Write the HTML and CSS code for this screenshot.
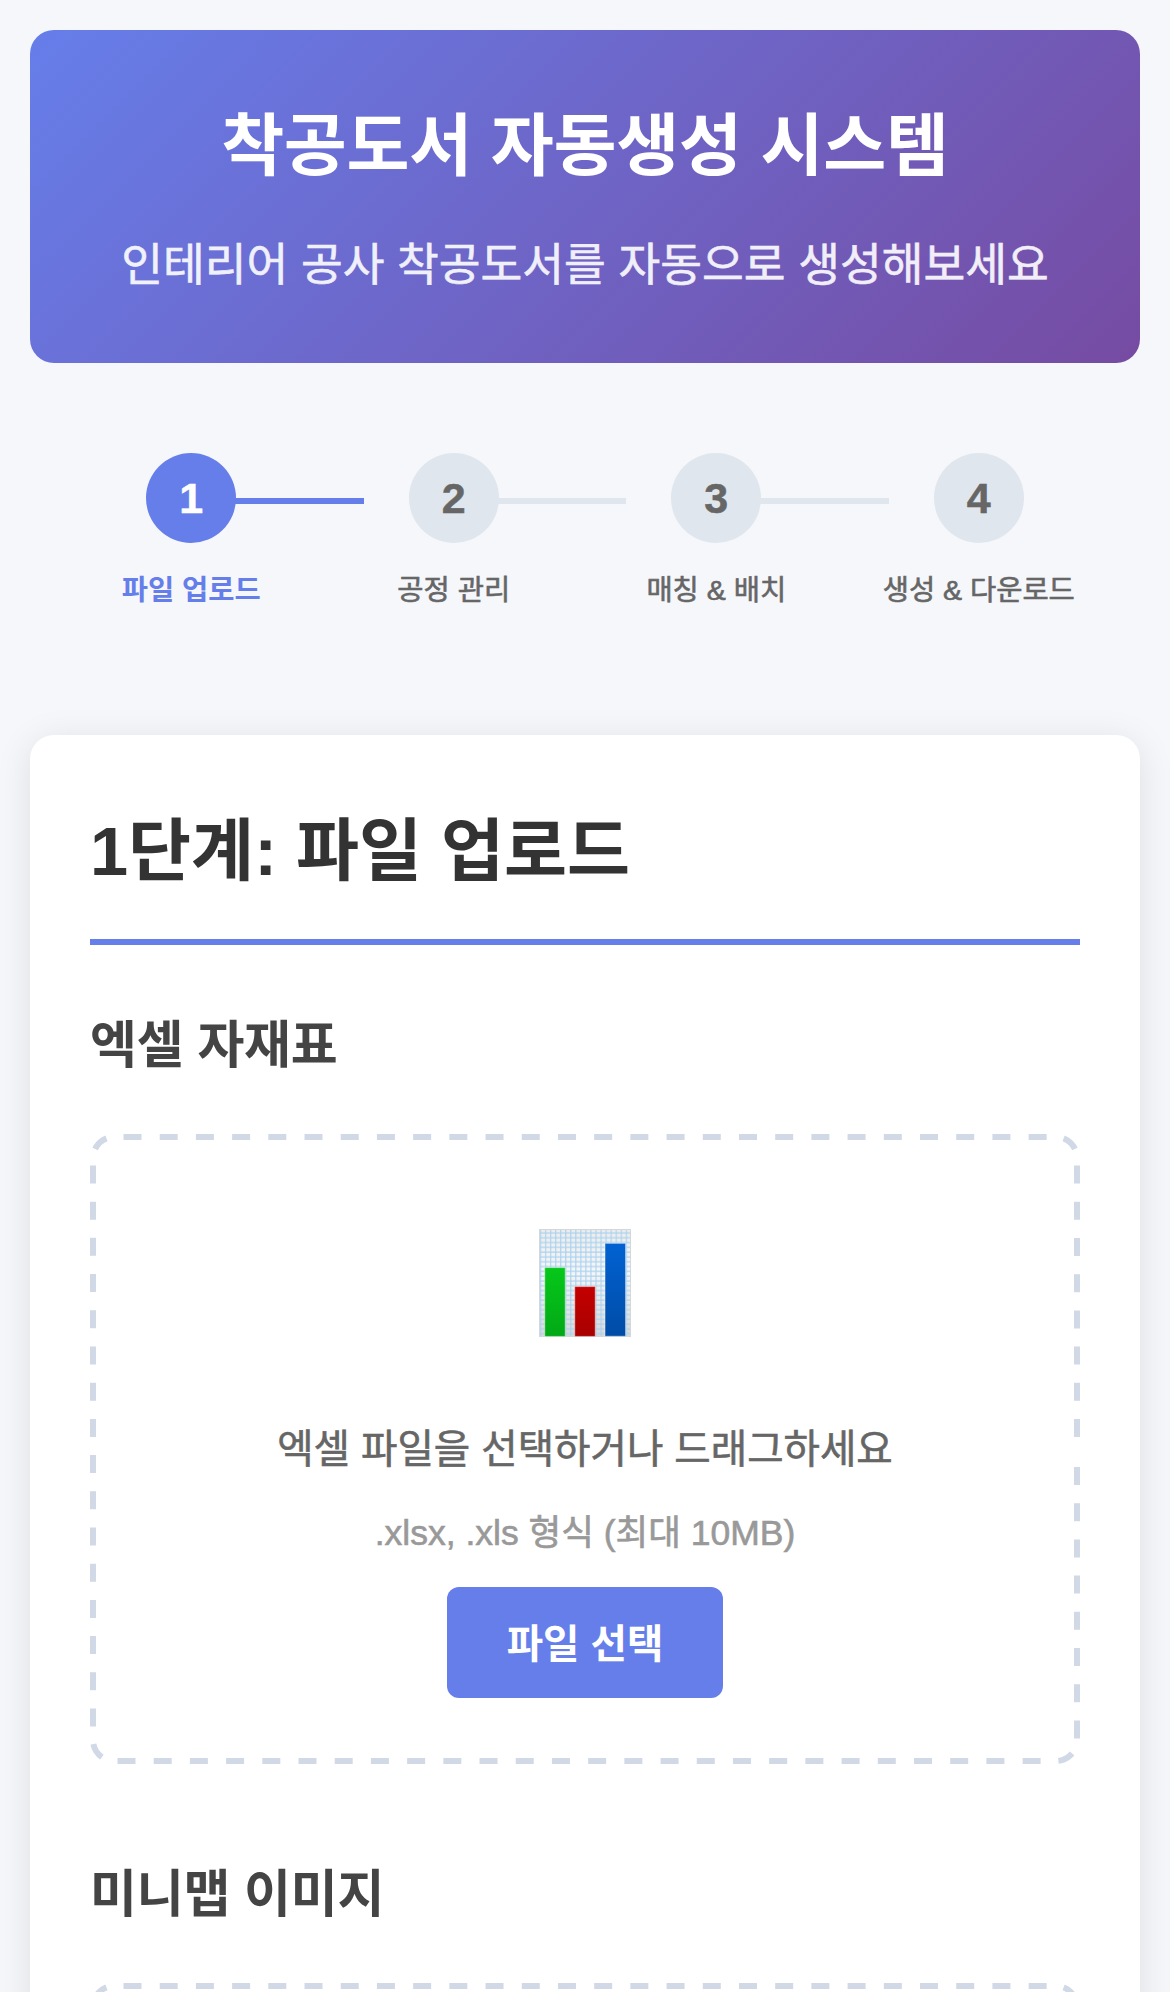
FILE: index.html
```html
<!DOCTYPE html>
<html lang="ko">
<head>
<meta charset="UTF-8">
<title>착공도서 자동생성 시스템</title>
<link rel="stylesheet" href="styles.css">
</head>
<body>
<header class="header">
  <h1 class="header-title">착공도서 자동생성 시스템</h1>
  <p class="header-sub">인테리어 공사 착공도서를 자동으로 생성해보세요</p>
</header>
<nav class="steps">
  <div class="step active"><div class="step-row"><span class="step-number">1</span><span class="step-line"></span></div><span class="step-label">파일 업로드</span></div>
  <div class="step"><div class="step-row"><span class="step-number">2</span><span class="step-line"></span></div><span class="step-label">공정 관리</span></div>
  <div class="step"><div class="step-row"><span class="step-number">3</span><span class="step-line"></span></div><span class="step-label">매칭 &amp; 배치</span></div>
  <div class="step"><div class="step-row"><span class="step-number">4</span></div><span class="step-label">생성 &amp; 다운로드</span></div>
</nav>
<main class="card">
  <h2 class="card-title">1단계: 파일 업로드</h2>
  <section class="upload">
    <h3 class="upload-title">엑셀 자재표</h3>
    <div class="dropzone">
      <svg class="dashes" viewBox="0 0 990 630"><path d="M990 315V606A24 24 0 0 1 966 630H24A24 24 0 0 1 0 606V24A24 24 0 0 1 24 0H966A24 24 0 0 1 990 24Z"/></svg>
      <svg class="chart-icon" viewBox="0 0 92 108">
        <defs>
          <linearGradient id="paper" x2="0" y2="1"><stop stop-color="#eeecea"/><stop offset=".4" stop-color="#f6f6f6"/><stop offset="1" stop-color="#dad7d5"/></linearGradient>
          <linearGradient id="green" x2="0" y2="1"><stop stop-color="#06c81a"/><stop offset="1" stop-color="#02a916"/></linearGradient>
          <linearGradient id="red" x2="0" y2="1"><stop stop-color="#c40000"/><stop offset="1" stop-color="#a80000"/></linearGradient>
          <linearGradient id="blue" x2="0" y2="1"><stop stop-color="#0262d2"/><stop offset="1" stop-color="#004ca6"/></linearGradient>
          <pattern id="grid" width="5.05" height="4.8" patternUnits="userSpaceOnUse"><path d="M1.5 0V4.8M0 4H5.05" stroke="#a9d3f2" stroke-width="1.1" fill="none"/></pattern>
        </defs>
        <rect width="92" height="108" fill="url(#paper)"/>
        <rect width="92" height="108" fill="url(#grid)"/>
        <rect x=".5" y=".5" width="91" height="107" fill="none" stroke="#d5d8da"/>
        <g stroke="#fff" stroke-opacity=".4" stroke-width="1.2">
          <rect x="5.7" y="38.5" width="20.6" height="69" fill="url(#green)"/>
          <rect x="35.7" y="57.5" width="20.6" height="50" fill="url(#red)"/>
          <rect x="66" y="14.3" width="20.6" height="93" fill="url(#blue)"/>
        </g>
      </svg>
      <p class="drop-text">엑셀 파일을 선택하거나 드래그하세요</p>
      <p class="drop-hint">.xlsx, .xls 형식 (최대 10MB)</p>
      <button class="button" type="button">파일 선택</button>
    </div>
  </section>
  <section class="upload">
    <h3 class="upload-title">미니맵 이미지</h3>
    <div class="dropzone">
      <svg class="dashes" viewBox="0 0 990 630"><path d="M990 315V606A24 24 0 0 1 966 630H24A24 24 0 0 1 0 606V24A24 24 0 0 1 24 0H966A24 24 0 0 1 990 24Z"/></svg>
    </div>
  </section>
</main>
</body>
</html>
```
FILE: styles.css
```css
* { margin: 0; padding: 0; box-sizing: border-box; }

body {
  height: 1992px;
  padding: 30px;
  overflow: hidden;
  background: #f5f7fb;
  color: #333;
  font-family: "Liberation Sans", "Noto Sans CJK KR", sans-serif;
}

h1, h2, h3, p { white-space: nowrap; }

.header {
  height: 333px;
  padding: 59px 60px;
  border-radius: 24px;
  background: linear-gradient(135deg, #667eea 0%, #764ba2 100%);
  color: #fff;
  text-align: center;
}
.header-title { margin-bottom: 23px; font-size: 68.5px; line-height: 115px; letter-spacing: -0.004em; }
.header-sub { margin: 0 -30px; font-size: 45.4px; line-height: 77px; opacity: 0.9; -webkit-text-stroke: 0.6px; }

.steps {
  display: grid;
  grid-template-columns: repeat(4, 1fr);
  height: 372px;
  padding: 90px 30px 0;
}
.step { text-align: center; color: #666; }
.step-row { display: grid; grid-template-columns: 1fr 90px 1fr; margin-bottom: 23px; }
.step-number {
  grid-column: 2;
  height: 90px;
  border-radius: 50%;
  background: #dfe6ee;
  font-size: 43px;
  font-weight: 700;
  line-height: 90px;
  -webkit-text-stroke: 0.5px;
}
.step-line { height: 6px; margin: 45px -41.25px 0 -1px; background: #dfe6ee; }
.step-label { display: block; font-size: 28.5px; line-height: 48px; white-space: nowrap; -webkit-text-stroke: 0.6px; }
.active .step-number, .active .step-line { background: #667eea; }
.active .step-number { color: #fff; }
.active .step-label { color: #667eea; font-weight: 700; -webkit-text-stroke: 0; }

.card {
  height: 1500px;
  padding: 60px;
  border-radius: 24px;
  background: #fff;
  box-shadow: 0 6px 36px rgba(0, 0, 0, 0.1);
}
.card-title {
  height: 150px;
  border-bottom: 6px solid #667eea;
  font-size: 68.5px;
  line-height: 113px;
}
.upload { padding-top: 58px; }
.upload + .upload { padding-top: 88px; }
.upload-title { margin-bottom: 45px; color: #444; font-size: 51px; line-height: 86px; letter-spacing: -0.004em; }

.dropzone {
  position: relative;
  display: flex;
  flex-direction: column;
  align-items: center;
  height: 630px;
  padding-top: 95px;
  border-radius: 24px;
  overflow: hidden;
}
.dashes { position: absolute; inset: 0; width: 990px; height: 630px; }
.dashes path { fill: none; stroke: #d1d9e6; stroke-width: 12; stroke-dasharray: 18 18.205; stroke-dashoffset: -18; }
.chart-icon { flex: none; width: 92px; height: 108px; margin-bottom: 79px; }
.drop-text { margin-bottom: 20px; color: #666; font-size: 39.6px; line-height: 67px; -webkit-text-stroke: 0.6px; }
.drop-hint { margin-bottom: 24px; color: #999; font-size: 35.5px; line-height: 60px; -webkit-text-stroke: 0.6px; }
.button {
  width: 276px;
  height: 111px;
  padding-top: 3px;
  border: 0;
  border-radius: 12px;
  background: #667eea;
  color: #fff;
  font-family: inherit;
  font-size: 39.6px;
  font-weight: 700;
  line-height: 108px;
}
```
